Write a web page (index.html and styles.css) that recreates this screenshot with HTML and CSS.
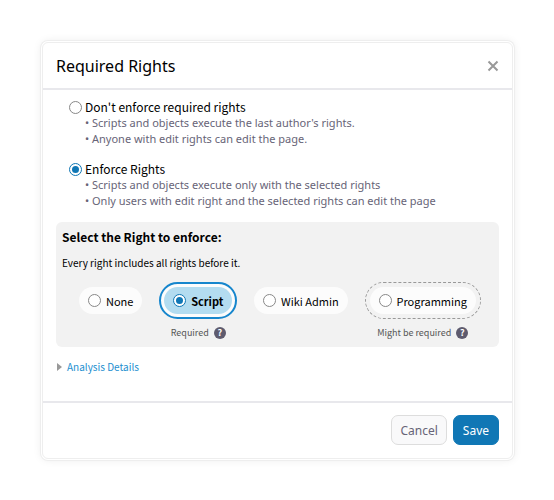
FILE: index.html
```
<!DOCTYPE html>
<html lang="en">
<head>
  <meta charset="UTF-8" />
  <meta name="viewport" content="width=device-width, initial-scale=1.0" />
  <title>Required Rights</title>
  <link rel="stylesheet" href="styles.css">
</head>
<body>
  <form class="modal" role="dialog" aria-labelledby="modal-title">
    <header class="modal-header">
      <h1 id="modal-title">Required Rights</h1>
      <button type="button" class="close" aria-label="Close">
        <svg width="12" height="12" viewBox="0 0 12 12"><path d="M1.5 1.5l9 9M10.5 1.5l-9 9" stroke="#999" stroke-width="2" fill="none"/></svg>
      </button>
    </header>

    <div class="modal-body">
      <div class="option">
        <input type="radio" name="enforce" id="enforce-no">
        <div>
          <label for="enforce-no">Don't enforce required rights</label>
          <ul>
            <li>• Scripts and objects execute the last author's rights.</li>
            <li>• Anyone with edit rights can edit the page.</li>
          </ul>
        </div>
      </div>

      <div class="option">
        <input type="radio" name="enforce" id="enforce-yes" checked>
        <div>
          <label for="enforce-yes">Enforce Rights</label>
          <ul>
            <li>• Scripts and objects execute only with the selected rights</li>
            <li>• Only users with edit right and the selected rights can edit the page</li>
          </ul>
        </div>
      </div>

      <section class="rights">
        <h2>Select the Right to enforce:</h2>
        <p>Every right includes all rights before it.</p>
        <div class="levels">
          <div class="level">
            <label class="pill"><input type="radio" name="right"> None</label>
          </div>
          <div class="level">
            <label class="pill required"><input type="radio" name="right" checked> Script</label>
            <div class="hint">Required <button type="button" class="help" aria-label="Help">?</button></div>
          </div>
          <div class="level">
            <label class="pill"><input type="radio" name="right"> Wiki Admin</label>
          </div>
          <div class="level">
            <label class="pill maybe"><input type="radio" name="right"> Programming</label>
            <div class="hint">Might be required <button type="button" class="help" aria-label="Help">?</button></div>
          </div>
        </div>
      </section>

      <a class="details" href="#">
        <svg width="5" height="8" viewBox="0 0 5 8"><path d="M0 0l5 4-5 4z" fill="#999"/></svg>
        Analysis Details
      </a>
    </div>

    <footer class="modal-footer">
      <button type="button" class="btn">Cancel</button>
      <button type="submit" class="btn btn-primary">Save</button>
    </footer>
  </form>
</body>
</html>
```

FILE: styles.css
```
:root {
  --primary: #1077b5;
  --link: #1e8fd0;
  --border: #e8e8ec;
  --muted: #676477;
  --panel: #f2f2f2;
  --narrow: "Noto Sans CJK JP", "Noto Sans", sans-serif;
}

* {
  box-sizing: border-box;
}

body {
  font-family: "Noto Sans", "Open Sans", sans-serif;
  font-size: 12px;
  line-height: 16px;
  margin: 0;
  padding: 42px 41px 40px 42px;
  background-color: #fff;
  color: #000;
}

.modal {
  border: 1px solid #eee;
  border-radius: 6px;
  background-color: #fff;
  box-shadow: 0 0 0 1px #fff, 0 0 0 2px #eee, 0 0 10px rgba(0, 0, 0, 0.1);
}

.modal-header {
  display: flex;
  align-items: center;
  justify-content: space-between;
  padding: 12px 13px 11px;
  border-bottom: 2px solid var(--border);
}

h1 {
  margin: 0;
  font-size: 16px;
  font-weight: normal;
  line-height: 22px;
}

button {
  font-family: inherit;
  cursor: pointer;
}

.close {
  display: flex;
  padding: 0;
  border: none;
  background: none;
}

.modal-body {
  padding: 9px 13px 26px;
}

.option {
  display: flex;
  gap: 3px;
  margin: 0 13px;
}

.option + .option {
  margin-top: 14px;
}

.option label {
  display: block;
  font-family: var(--narrow);
}

.option ul {
  margin: 0;
  padding: 0;
  list-style: none;
  color: var(--muted);
  font-size: 11px;
}

input[type="radio"] {
  flex: none;
  display: grid;
  place-items: center;
  appearance: none;
  width: 13px;
  height: 13px;
  margin: 2px 0 0;
  border: 1px solid #888;
  border-radius: 50%;
  background-color: #fff;
}

input[type="radio"]:checked {
  border-color: var(--primary);
}

input[type="radio"]:checked::before {
  content: "";
  width: 7px;
  height: 7px;
  border-radius: 50%;
  background-color: var(--primary);
}

.rights {
  margin-top: 13px;
  padding: 7px 6px 6px;
  border-radius: 6px;
  background-color: var(--panel);
  font-family: var(--narrow);
}

h2 {
  margin: 0 0 10px;
  font-size: 12px;
  line-height: 16px;
}

.rights p {
  margin: 0 0 16px;
  font-size: 10px;
}

.levels {
  display: flex;
  justify-content: space-between;
  align-items: flex-start;
  padding: 0 17px;
}

.level {
  display: flex;
  flex-direction: column;
  align-items: center;
  gap: 11px;
}

.pill {
  display: flex;
  align-items: center;
  gap: 5px;
  height: 27px;
  padding: 0 9px;
  border-radius: 14px;
  background-color: #fcfcfc;
  font-size: 11px;
}

.pill input[type="radio"] {
  margin: 0;
}

.pill.required {
  background-color: #b3dcf0;
  font-weight: bold;
  box-shadow: 0 0 0 3px #fcfcfc;
  outline: 2px solid #1686cd;
  outline-offset: 3px;
}

.pill.maybe {
  outline: 1px dashed #999;
  outline-offset: 4px;
}

.hint {
  display: flex;
  align-items: center;
  gap: 5px;
  color: #555;
  font-size: 9px;
}

.help {
  width: 12px;
  height: 12px;
  padding: 0;
  border: none;
  border-radius: 50%;
  background-color: #5e5b6e;
  color: #fff;
  font-size: 9px;
  font-weight: bold;
  line-height: 12px;
}

.details {
  display: flex;
  align-items: center;
  gap: 5px;
  width: fit-content;
  margin: 12px 0 0 1px;
  color: var(--link);
  font-family: var(--narrow);
  font-size: 10px;
  text-decoration: none;
}

.modal-footer {
  display: flex;
  justify-content: flex-end;
  gap: 6px;
  padding: 12px 13px 13px;
  border-top: 2px solid var(--border);
}

.btn {
  height: 30px;
  padding: 0 8px;
  border: 1px solid #ddd;
  border-radius: 7px;
  background-color: #f9f9fa;
  color: var(--muted);
  font-size: 12px;
}

.btn-primary {
  padding: 0 9px;
  border-color: var(--primary);
  background-color: var(--primary);
  color: #fff;
}
```
